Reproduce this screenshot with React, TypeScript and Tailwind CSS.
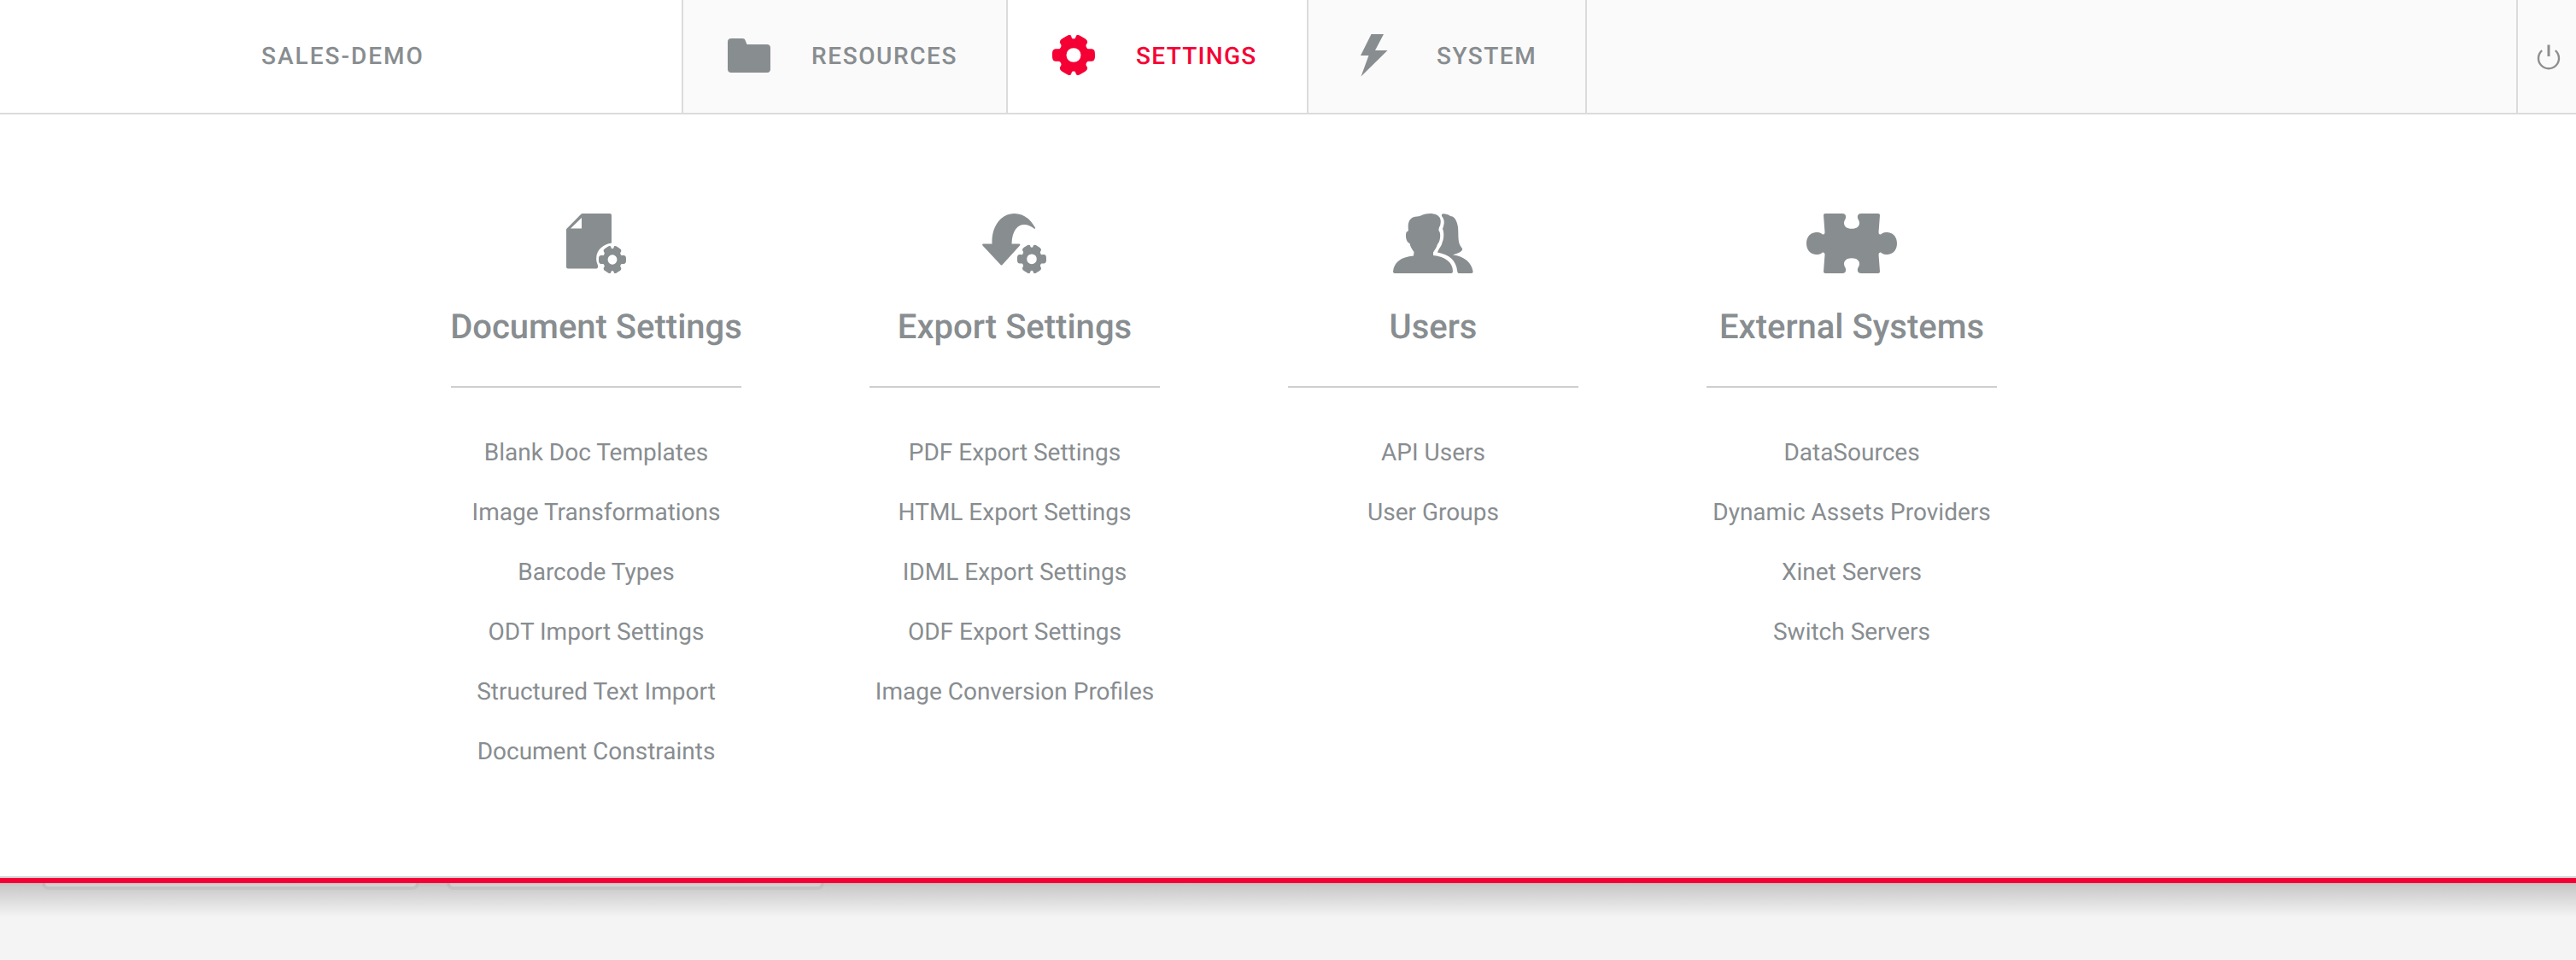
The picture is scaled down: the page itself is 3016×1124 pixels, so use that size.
import React from "react";

const GEAR =
  "M18 1.5 C20 .8 20.8 .2 22 2 C23 4 22.5 5.500 25 5.500 C27.5 5.500 27 4 28 2 C29.2 .2 30 .8 32 1.5 L38 5 C40.5 6.6 41.500 8 41 10.5 C39.5 13 39 13.5 40 15.5 C41.5 18.5 42 17.500 46 17.500 C49.500 18 50 20 50 25 C50 30 49.500 32 46 32.500 C42 32.500 41.5 31.5 40 34.5 C39 36.5 39.5 37 41 39.5 C41.5 42 40.5 43.4 38 45 L32 48.5 C30 49.2 29.2 49.8 28 48 C27 46 27.5 44.500 25 44.500 C22.5 44.500 23 46 22 48 C20.8 49.8 20 49.2 18 48.5 L12 45 C9.5 43.4 8.5 42 9 39.5 C10.5 37 11 36.5 10 34.5 C8.5 31.5 8 32.500 4 32.500 C.5 32 0 30 0 25 C0 20 .5 18 4 17.500 C8 17.500 8.5 18.5 10 15.5 C11 13.5 10.5 13 9 10.5 C8.5 8 9.5 6.6 12 5 Z M25 16.5 A8.5 8.5 0 1 0 25 33.5 A8.5 8.5 0 1 0 25 16.5 Z";

function FolderIcon() {
  return (
    <svg className="mb-[2px]" width="50" height="40" viewBox="0 0 50 40" fill="currentColor">
      <path d="M4 0H17.5C19 0 20 .8 20.6 2.3L22.5 7H46C48.5 7 50 8.500 50 11V36C50 38.500 48.500 40 46 40H4C1.500 40 0 38.500 0 36V4C0 1.500 1.500 0 4 0Z" />
    </svg>
  );
}

function GearIcon() {
  return (
    <svg
      className="mb-[3px]"
      width="50"
      height="47"
      viewBox="0 1 50 48"
      preserveAspectRatio="none"
      fill="currentColor"
      fillRule="evenodd"
    >
      <path d={GEAR} />
    </svg>
  );
}

function BoltIcon() {
  return (
    <svg className="mb-[2px]" width="32" height="50" viewBox="0 0 32 50" fill="currentColor">
      <path d="M12.500 0H27L17 19H31.500L.5 49.500L9.500 25H0Z" />
    </svg>
  );
}

function PowerIcon() {
  return (
    <svg width="28" height="30" viewBox="0 0 28 30" fill="none" stroke="currentColor">
      <path d="M6.200 7.100A12 12 0 1 0 21.800 7.100" strokeWidth="2.400" />
      <path d="M14 .5V14" strokeWidth="3" />
    </svg>
  );
}

function DocumentIcon() {
  return (
    <svg width="70" height="70" viewBox="0 0 70 70" fill="currentColor" fillRule="evenodd">
      <path d="M19 0H51Q53 0 53 2V34.500C43 36 34.500 43 35.200 54C35.200 58 38 61 37 63Q36.500 64.500 35 64.500H2Q0 64.500 0 62.500V19Q0 18 1 17.200L17 1Q18 0 19 0ZM18 5L5 17.500H18Z" />
      <svg x="38" y="38" width="32" height="32" viewBox="0 1 50 48" preserveAspectRatio="none">
        <path d={GEAR} />
      </svg>
    </svg>
  );
}

function ExportIcon() {
  return (
    <svg width="76" height="70" viewBox="0 0 76 70" fill="currentColor" fillRule="evenodd">
      <path d="M1 35.500H11.500C10.500 15 22 0 37.500 0C48 0 56 6 62 16.500Q62.500 18 61 17.800C49 8 35 13 34.500 35.500H43.500Q45 36 44 37.500L23.500 60Q22.500 61.200 21.500 60L.5 37.500Q-.5 36 1 35.500Z" />
      <svg x="41" y="36.600" width="34" height="33.400" viewBox="0 1 50 48" preserveAspectRatio="none">
        <path d={GEAR} />
      </svg>
    </svg>
  );
}

function UsersIcon() {
  return (
    <svg width="94" height="70" viewBox="0 0 94 70" fill="currentColor">
      <path d="M2 70Q0 70 0 68C1 57 9 51 24 49.500L24.500 45C22 42 20 38 19.500 35C16 34 14 28 15.500 22L18 20C17 12 18 4 28 3.500C34 3 35 0 43 0C52 0 57 4 55.500 12C55.500 15 53 16 53.500 20C56 22 56 32 52 36C51 40 48.500 43 47 45.500V49C61 50.500 70 57 70 67.500Q70 70 68 70Z" />
      <path d="M57 1Q58 0 61 .5C64 .8 66 2 67 3C72 3 75 9 76 16C77 27 75 34 81 41Q82.500 45 70 48.500C84 50 92 58 93.500 67.500Q94 70 91 70H77Q75.500 70 75.200 67.500C74 55 66 48 52 45.500C54 40 57 38 57.500 34C59.500 30 60 22 58 18C60 12 61 8 57 3Z" />
    </svg>
  );
}

function PuzzleIcon() {
  return (
    <svg width="106" height="70" viewBox="0 0 106 70" fill="currentColor">
      <path d="M22 0H42Q46 0 46.200 4C46 7 44 8 44 11C44 15 47 17.800 53 17.800C59 17.800 62 15 62 11C62 8 60 7 59.800 4Q60 0 64 0H84Q86 0 86 2L84.500 22Q84.500 25 87 24.500C90 22 92 22 95 22C102 22.500 106 28 106 35C106 42 102 47.500 95 48C92 48 90 48 87 45.500Q84.500 45 84.500 48L86 68Q86 70 84 70H64Q60 70 59.800 66C60 63 62 62 62 59C62 55 59 52.200 53 52.200C47 52.200 44 55 44 59C44 62 46 63 46.200 66Q46 70 42 70H22Q20 70 20 68L21.500 48Q21.500 45 19 45.500C16 48 14 48 11 48C4 47.500 0 42 0 35C0 28 4 22.500 11 22C14 22 16 22 19 24.500Q21.500 25 21.500 22L20 2Q20 0 22 0Z" />
    </svg>
  );
}

const columns = [
  {
    title: "Document Settings",
    icon: <DocumentIcon />,
    links: ["Blank Doc Templates", "Image Transformations", "Barcode Types", "ODT Import Settings", "Structured Text Import", "Document Constraints"],
  },
  {
    title: "Export Settings",
    icon: <ExportIcon />,
    links: ["PDF Export Settings", "HTML Export Settings", "IDML Export Settings", "ODF Export Settings", "Image Conversion Profiles"],
  },
  { title: "Users", icon: <UsersIcon />, links: ["API Users", "User Groups"] },
  {
    title: "External Systems",
    icon: <PuzzleIcon />,
    links: ["DataSources", "Dynamic Assets Providers", "Xinet Servers", "Switch Servers"],
  },
];

export default function App() {
  return (
    <div className="flex h-[1124px] w-[3016px] flex-col overflow-hidden bg-[#f4f4f4] font-['Roboto',sans-serif] text-[#888d90] [text-rendering:geometricPrecision]">
      <header className="flex h-[134px] shrink-0 border-b-2 border-[#dbdbdb] bg-[#fafafa] text-[28px] leading-[132px] font-medium tracking-[2px] whitespace-nowrap">
        <div className="w-[798px] bg-white pl-[306px]">SALES-DEMO</div>
        <a className="flex w-[380px] items-center border-l-2 border-[#dbdbdb] pl-[52px]">
          <FolderIcon />
          <span className="ml-[48px] tracking-[1.6px]">RESOURCES</span>
        </a>
        <a className="flex w-[352px] items-center border-l-2 border-[#dbdbdb] bg-white pl-[52px] text-[#f50035]">
          <GearIcon />
          <span className="ml-[48px] tracking-[1.3px]">SETTINGS</span>
        </a>
        <a className="flex w-[328px] items-center border-x-2 border-[#dbdbdb] pl-[61px]">
          <BoltIcon />
          <span className="ml-[57px] tracking-[1.5px]">SYSTEM</span>
        </a>
        <div className="ml-auto flex w-[70px] items-center border-l-2 border-[#dbdbdb] pt-[2px] pl-[22px] text-[#8e8e8e]">
          <PowerIcon />
        </div>
      </header>

      <main className="flex h-[900px] shrink-0 gap-[150px] border-b-[6px] border-[#f50035] bg-white pt-[116px] pl-[528px] shadow-[inset_0_-2px_0_#d0d0d0]">
        {columns.map((column) => (
          <section key={column.title} className="flex w-[340px] flex-col items-center text-center whitespace-nowrap">
            <div className="h-[70px]">{column.icon}</div>
            <h2 className="mt-[39px] flex h-[93px] w-[340px] shrink-0 justify-center text-[40px] leading-[48px] font-medium">
              {column.title}
            </h2>
            <div className="h-[2px] w-full bg-[#cfcfcf]" />
            <ul className="mt-[41px] text-[28px] leading-[70px]">
              {column.links.map((link) => (
                <li key={link}>{link}</li>
              ))}
            </ul>
          </section>
        ))}
      </main>

      <div className="relative h-[90px] shrink-0">
        <div className="flex gap-[32px] pl-[49px]">
          <div className="h-[8px] w-[442px] rounded-b-[12px] border-x-4 border-b-4 border-[#e9e9e9] bg-white" />
          <div className="h-[8px] w-[442px] rounded-b-[12px] border-x-4 border-b-4 border-[#e9e9e9] bg-white" />
        </div>
        <div className="absolute inset-x-0 top-0 h-[40px] bg-linear-to-b from-black/19 to-transparent" />
      </div>
    </div>
  );
}
